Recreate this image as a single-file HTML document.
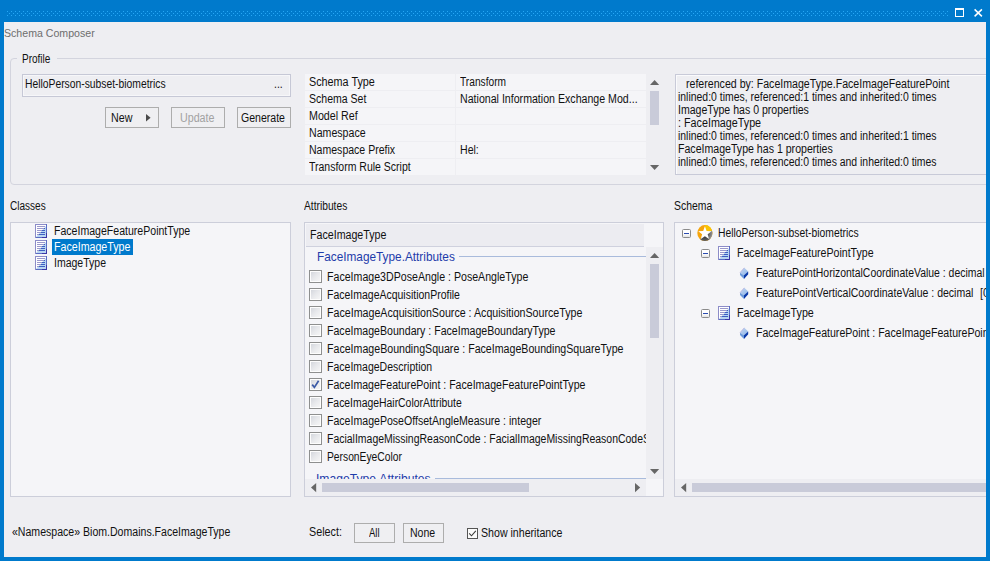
<!DOCTYPE html>
<html><head><meta charset="utf-8">
<style>
*{box-sizing:border-box;margin:0;padding:0}
html,body{width:990px;height:561px;overflow:hidden;background:#007acc}
body{position:relative;font-family:"Liberation Sans",sans-serif;font-size:12px;color:#111}
.abs{position:absolute}
svg{position:absolute;overflow:visible}
.t{position:absolute;white-space:pre;line-height:14px;height:14px;transform-origin:0 50%}
.panel{position:absolute;background:#f5f5f8;border:1px solid #ccceda}
.btn{position:absolute;border:1px solid #adadad;background:#efeff2}
.row{position:absolute;left:305px;width:341px;height:16px;background:#f5f5f8}
.row i{position:absolute;left:150px;top:0;width:1px;height:16px;background:#eeeef2}
.cb{position:absolute;left:4px;width:13px;height:13px;border:1px solid #8e8f8f;background:linear-gradient(135deg,#d0d3da 0%,#e8e9ec 50%,#f8f8f8 100%);box-shadow:inset 0 0 0 1px #fdfdfd}
.exp{position:absolute;width:9px;height:9px;border:1px solid #8b8b8b;border-radius:1.5px;background:linear-gradient(#fff 50%,#e4e4e4)}
.exp b{position:absolute;left:1px;top:3px;width:5px;height:1px;background:#2b4bb0}
.sbt{position:absolute;background:#c9cbd9}
</style></head><body>
<svg width="0" height="0"><defs>
<pattern id="d" width="4" height="4" patternUnits="userSpaceOnUse"><rect x="0" y="0" width="1" height="1" fill="#27a7f5"/><rect x="2" y="2" width="1" height="1" fill="#27a7f5"/></pattern>
<g id="cls" shape-rendering="crispEdges">
<rect x="0" y="0" width="12" height="14" fill="#fff"/>
<path d="M1 13 L11 2 L11 13Z" fill="#b9d5f1" shape-rendering="auto"/>
<rect x="2" y="2" width="8" height="1" fill="#9a98cc"/><rect x="2" y="4" width="8" height="1" fill="#9a98cc"/><rect x="2" y="6" width="8" height="1" fill="#9a98cc"/><rect x="2" y="8" width="8" height="1" fill="#9a98cc"/><rect x="2" y="10" width="8" height="1" fill="#9a98cc"/>
<rect x="9" y="4" width="1" height="1" fill="#3f5fc2"/><rect x="7" y="6" width="3" height="1" fill="#3f5fc2"/><rect x="6" y="8" width="4" height="1" fill="#3f5fc2"/><rect x="4" y="10" width="6" height="1" fill="#3f5fc2"/>
<rect x="0" y="0" width="12" height="1" fill="#8c8cc8"/><rect x="0" y="0" width="1" height="14" fill="#8c8cc8"/>
<rect x="11" y="0" width="1" height="9" fill="#5a6cc4"/><rect x="11" y="9" width="1" height="5" fill="#3b36a6"/>
<rect x="1" y="13" width="6" height="1" fill="#5a6cc4"/><rect x="7" y="13" width="5" height="1" fill="#3b36a6"/>
</g>
<g id="attr">
<linearGradient id="ga" x1="0" y1="0" x2="1" y2="1"><stop offset="0" stop-color="#c4d6f2"/><stop offset="1" stop-color="#8fb6e8"/></linearGradient>
<path d="M4.3 -0.2 L8.2 3.6 L4 7.3 L0 4.7Z" fill="url(#ga)"/>
<path d="M4.3 -0.2 L0 4.7" stroke="#b4a9d9" stroke-width="0.7"/>
<path d="M0 4.7 L4 7.3 L4 10.9 L0 7.1Z" fill="#6c9adb"/>
<path d="M4 7.3 L8.2 3.6 L8.2 6.3 L4 10.9Z" fill="#0a38a8"/>
</g>
<g id="star">
<clipPath id="sc"><ellipse cx="7.9" cy="8.1" rx="7.6" ry="8"/></clipPath>
<radialGradient id="gd" gradientUnits="userSpaceOnUse" cx="7.9" cy="8" r="8"><stop offset="0.4" stop-color="#3a3a3a"/><stop offset="1" stop-color="#626262"/></radialGradient>
<radialGradient id="gg" gradientUnits="userSpaceOnUse" cx="7.9" cy="8" r="8"><stop offset="0.4" stop-color="#585858"/><stop offset="1" stop-color="#9a9a9a"/></radialGradient>
<g clip-path="url(#sc)">
<rect x="-1" y="-1" width="18" height="19" fill="#f5a40c"/>
<path d="M7.90 8.30 L7.90 -5.70 L22.34 -10.87 L21.36 4.44Z" fill="#f9c403"/>
<path d="M7.90 8.30 L21.06 3.51 L30.59 16.11 L15.32 20.17Z" fill="url(#gg)"/>
<path d="M7.90 8.30 L16.52 19.33 L7.90 32.30 L-0.72 19.33Z" fill="url(#gd)"/>
</g>
<path d="M7.90 1.30 L9.60 5.95 L14.56 6.14 L10.66 9.20 L12.01 13.96 L7.90 11.20 L3.79 13.96 L5.14 9.20 L1.24 6.14 L6.20 5.95Z" fill="#fff"/>
</g>
</defs></svg>

<!-- title bar -->
<svg style="left:7px;top:11px" width="942" height="6"><rect width="942" height="6" fill="url(#d)"/></svg>
<svg style="left:955px;top:8px" width="10" height="10" shape-rendering="crispEdges"><rect x="0" y="0" width="9" height="2" fill="#fff"/><rect x="0" y="0" width="1" height="9" fill="#fff"/><rect x="8" y="0" width="1" height="9" fill="#fff"/><rect x="0" y="8" width="9" height="1" fill="#fff"/></svg>
<svg style="left:974px;top:9px" width="9" height="8"><path d="M0.6 0.4 L7.9 7.4 M7.9 0.4 L0.6 7.4" stroke="#fff" stroke-width="1.5" fill="none"/></svg>

<div class="abs" style="left:4px;top:22px;width:982px;height:535px;background:#eeeef2"></div>
<div class="abs" style="left:0;top:0;width:986px;height:557px;overflow:hidden">

<!-- Profile group -->
<div class="abs" style="left:10px;top:58px;width:990px;height:127px;border:1px solid #d3d4de;border-radius:4px"></div>
<div class="abs" style="left:17px;top:52px;width:40px;height:14px;background:#eeeef2"></div>
<div class="abs" style="left:22px;top:74px;width:269px;height:23px;border:1px solid #c6c8d6;background:#eeeef2;box-shadow:inset 0 0 0 1px #f6f6f9"></div>
<div class="btn" style="left:105px;top:107px;width:54px;height:21px"></div>
<svg style="left:146px;top:114px" width="5" height="8"><path d="M0 0 L4.6 3.8 L0 7.6Z" fill="#4a4a4a"/></svg>
<div class="btn" style="left:171px;top:107px;width:54px;height:21px"></div>
<div class="btn" style="left:237px;top:107px;width:54px;height:21px"></div>

<!-- property grid -->
<div class="row" style="top:74px"><i></i></div>
<div class="row" style="top:91px"><i></i></div>
<div class="row" style="top:108px"><i></i></div>
<div class="row" style="top:125px"><i></i></div>
<div class="row" style="top:142px"><i></i></div>
<div class="row" style="top:159px"><i></i></div>
<svg style="left:650px;top:80px" width="10" height="6"><path d="M0 5 L4.6 0 L9.2 5Z" fill="#666"/></svg>
<div class="sbt" style="left:650px;top:91px;width:9px;height:34px"></div>
<svg style="left:650px;top:165px" width="10" height="6"><path d="M0 0 L4.6 5 L9.2 0Z" fill="#666"/></svg>

<!-- notes -->
<div class="panel" style="left:675px;top:74px;width:330px;height:101px;background:#eeeef2;border-color:#c8cad8;box-shadow:inset 1px 1px 0 #fafafc"></div>

<!-- Classes panel -->
<div class="panel" style="left:10px;top:222px;width:281px;height:275px"></div>
<svg style="left:35px;top:224px" width="12" height="14"><use href="#cls"/></svg>
<svg style="left:35px;top:240px" width="12" height="14"><use href="#cls"/></svg>
<svg style="left:35px;top:256px" width="12" height="14"><use href="#cls"/></svg>
<div class="abs" style="left:52px;top:239px;width:81px;height:16px;background:#007acc"></div>

<!-- Attributes panel -->
<div class="panel" style="left:304px;top:222px;width:360px;height:275px"></div>
<div class="abs" style="left:305px;top:223px;width:341px;height:256px;overflow:hidden">
<div class="abs" style="left:1px;top:1px;width:338px;height:22px;background:#ececf1"></div>
<div class="abs" style="left:1px;top:23px;width:338px;height:1px;background:#cfd1de"></div>
<div class="abs" style="left:154px;top:33px;width:187px;height:1px;background:#a9bbdc"></div>
<div class="abs" style="left:130px;top:255px;width:211px;height:1px;background:#a9bbdc"></div>
<div class="cb" style="top:47px"></div>
<div class="cb" style="top:65px"></div>
<div class="cb" style="top:83px"></div>
<div class="cb" style="top:101px"></div>
<div class="cb" style="top:119px"></div>
<div class="cb" style="top:137px"></div>
<div class="cb" style="top:155px"></div>
<svg style="left:6px;top:157px" width="9" height="9"><path d="M1.2 4.6 L3.4 7.4 L7.6 0.8" stroke="#3b5aa6" stroke-width="1.7" fill="none"/></svg>
<div class="cb" style="top:173px"></div>
<div class="cb" style="top:191px"></div>
<div class="cb" style="top:209px"></div>
<div class="cb" style="top:227px"></div>
<div class="t" style="left:4.90px;top:4.84px;transform:scaleX(0.8879);">FaceImageType</div>
<div class="t" style="left:12.00px;top:25.50px;transform:scaleX(0.9081);font-size:13px;line-height:15px;height:15px;color:#1e3caa;">FaceImageType.Attributes</div>
<div class="t" style="left:21.80px;top:47.14px;transform:scaleX(0.8849);">FaceImage3DPoseAngle : PoseAngleType</div>
<div class="t" style="left:21.80px;top:65.14px;transform:scaleX(0.8739);">FaceImageAcquisitionProfile</div>
<div class="t" style="left:21.80px;top:83.14px;transform:scaleX(0.8883);">FaceImageAcquisitionSource : AcquisitionSourceType</div>
<div class="t" style="left:21.80px;top:101.14px;transform:scaleX(0.8828);">FaceImageBoundary : FaceImageBoundaryType</div>
<div class="t" style="left:21.80px;top:119.14px;transform:scaleX(0.8853);">FaceImageBoundingSquare : FaceImageBoundingSquareType</div>
<div class="t" style="left:21.80px;top:137.14px;transform:scaleX(0.8762);">FaceImageDescription</div>
<div class="t" style="left:21.80px;top:155.14px;transform:scaleX(0.8804);">FaceImageFeaturePoint : FaceImageFeaturePointType</div>
<div class="t" style="left:21.80px;top:173.14px;transform:scaleX(0.8668);">FaceImageHairColorAttribute</div>
<div class="t" style="left:21.80px;top:191.14px;transform:scaleX(0.8810);">FaceImagePoseOffsetAngleMeasure : integer</div>
<div class="t" style="left:21.80px;top:209.14px;transform:scaleX(0.8725);">FacialImageMissingReasonCode : FacialImageMissingReasonCodeSimpleType</div>
<div class="t" style="left:21.80px;top:227.14px;transform:scaleX(0.8572);">PersonEyeColor</div>
<div class="t" style="left:11.30px;top:247.50px;transform:scaleX(0.9329);font-size:13px;line-height:15px;height:15px;color:#1e3caa;">ImageType.Attributes</div>
</div>
<!-- attr scrollbars -->
<div class="abs" style="left:305px;top:479px;width:341px;height:17px;background:#eeeef2"></div>
<div class="abs" style="left:646px;top:247px;width:17px;height:232px;background:#eeeef2"></div>
<svg style="left:650px;top:253px" width="10" height="6"><path d="M0 5 L4.6 0 L9.2 5Z" fill="#666"/></svg>
<div class="sbt" style="left:650px;top:264px;width:9px;height:74px"></div>
<svg style="left:650px;top:469px" width="10" height="6"><path d="M0 0 L4.6 5 L9.2 0Z" fill="#666"/></svg>
<svg style="left:311px;top:483px" width="6" height="10"><path d="M5.2 0 L0 4.6 L5.2 9.2Z" fill="#666"/></svg>
<div class="sbt" style="left:322px;top:483px;width:207px;height:9px"></div>
<svg style="left:635px;top:483px" width="6" height="10"><path d="M0 0 L5.2 4.6 L0 9.2Z" fill="#666"/></svg>

<!-- Schema panel -->
<div class="panel" style="left:674px;top:222px;width:330px;height:275px"></div>
<div class="abs" style="left:676px;top:223px;width:310px;height:256px;overflow:hidden">
<div class="exp" style="left:6px;top:6px"><b></b></div>
<svg style="left:21px;top:2px" width="16" height="17"><use href="#star"/></svg>
<div class="exp" style="left:25px;top:26px"><b></b></div>
<svg style="left:42px;top:23px" width="12" height="14"><use href="#cls"/></svg>
<svg style="left:64px;top:45px" width="9" height="11"><use href="#attr"/></svg>
<svg style="left:64px;top:65px" width="9" height="11"><use href="#attr"/></svg>
<div class="exp" style="left:25px;top:86px"><b></b></div>
<svg style="left:42px;top:83px" width="12" height="14"><use href="#cls"/></svg>
<svg style="left:64px;top:105px" width="9" height="11"><use href="#attr"/></svg>
<div class="t" style="left:41.90px;top:2.84px;transform:scaleX(0.8604);">HelloPerson-subset-biometrics</div>
<div class="t" style="left:60.50px;top:22.84px;transform:scaleX(0.8826);">FaceImageFeaturePointType</div>
<div class="t" style="left:79.70px;top:42.84px;transform:scaleX(0.8705);">FeaturePointHorizontalCoordinateValue : decimal</div>
<div class="t" style="left:79.70px;top:62.84px;transform:scaleX(0.8769);">FeaturePointVerticalCoordinateValue : decimal</div>
<div class="t" style="left:304.00px;top:62.84px;transform:scaleX(0.9050);">[0..1]</div>
<div class="t" style="left:60.50px;top:82.84px;transform:scaleX(0.8925);">FaceImageType</div>
<div class="t" style="left:79.70px;top:102.84px;transform:scaleX(0.8804);">FaceImageFeaturePoint : FaceImageFeaturePointType</div>
</div>
<div class="abs" style="left:675px;top:479px;width:311px;height:17px;background:#eeeef2"></div>
<svg style="left:681px;top:483px" width="6" height="10"><path d="M5.2 0 L0 4.6 L5.2 9.2Z" fill="#666"/></svg>
<div class="sbt" style="left:692px;top:483px;width:300px;height:9px"></div>

<!-- bottom -->
<div class="btn" style="left:354px;top:523px;width:41px;height:20px"></div>
<div class="btn" style="left:403px;top:523px;width:41px;height:20px"></div>
<div class="abs" style="left:467px;top:528px;width:11px;height:11px;border:1px solid #555;background:#fbfbfb"></div>
<svg style="left:468px;top:529px" width="9" height="9"><path d="M1.2 4.4 L3.5 6.8 L7.8 1.8" stroke="#3a3a3a" stroke-width="1.1" fill="none"/></svg>

<div class="t" style="left:3.90px;top:27.31px;transform:scaleX(1.0092);font-size:10.5px;line-height:12.5px;height:12.5px;color:#6d6d6d;">Schema Composer</div>
<div class="t" style="left:21.70px;top:51.84px;transform:scaleX(0.8349);">Profile</div>
<div class="t" style="left:24.80px;top:76.84px;transform:scaleX(0.8604);">HelloPerson-subset-biometrics</div>
<div class="t" style="left:274.20px;top:76.84px;transform:scaleX(0.8686);">...</div>
<div class="t" style="left:111.00px;top:111.24px;transform:scaleX(0.8911);">New</div>
<div class="t" style="left:179.90px;top:111.24px;transform:scaleX(0.8914);color:#a2a2a2;">Update</div>
<div class="t" style="left:240.90px;top:111.24px;transform:scaleX(0.8792);">Generate</div>
<div class="t" style="left:308.70px;top:74.84px;transform:scaleX(0.8994);">Schema Type</div>
<div class="t" style="left:308.70px;top:91.84px;transform:scaleX(0.8780);">Schema Set</div>
<div class="t" style="left:308.70px;top:108.84px;transform:scaleX(0.8903);">Model Ref</div>
<div class="t" style="left:308.70px;top:125.84px;transform:scaleX(0.8839);">Namespace</div>
<div class="t" style="left:308.70px;top:142.84px;transform:scaleX(0.8782);">Namespace Prefix</div>
<div class="t" style="left:308.70px;top:159.84px;transform:scaleX(0.8748);">Transform Rule Script</div>
<div class="t" style="left:460.10px;top:74.84px;transform:scaleX(0.8482);">Transform</div>
<div class="t" style="left:460.10px;top:91.84px;transform:scaleX(0.8845);">National Information Exchange Mod...</div>
<div class="t" style="left:460.10px;top:142.84px;transform:scaleX(0.8808);">Hel:</div>
<div class="t" style="left:686.30px;top:76.84px;transform:scaleX(0.8834);">referenced by: FaceImageType.FaceImageFeaturePoint</div>
<div class="t" style="left:677.50px;top:89.84px;transform:scaleX(0.8692);">inlined:0 times, referenced:1 times and inherited:0 times</div>
<div class="t" style="left:677.50px;top:102.84px;transform:scaleX(0.8799);">ImageType has 0 properties</div>
<div class="t" style="left:677.50px;top:115.84px;transform:scaleX(0.8963);">: FaceImageType</div>
<div class="t" style="left:677.50px;top:128.84px;transform:scaleX(0.8692);">inlined:0 times, referenced:0 times and inherited:1 times</div>
<div class="t" style="left:677.50px;top:141.84px;transform:scaleX(0.8824);">FaceImageType has 1 properties</div>
<div class="t" style="left:677.50px;top:154.84px;transform:scaleX(0.8692);">inlined:0 times, referenced:0 times and inherited:0 times</div>
<div class="t" style="left:9.70px;top:198.64px;transform:scaleX(0.8363);">Classes</div>
<div class="t" style="left:303.90px;top:198.64px;transform:scaleX(0.8540);">Attributes</div>
<div class="t" style="left:674.10px;top:198.64px;transform:scaleX(0.8676);">Schema</div>
<div class="t" style="left:54.10px;top:223.84px;transform:scaleX(0.8800);">FaceImageFeaturePointType</div>
<div class="t" style="left:54.10px;top:239.84px;transform:scaleX(0.8879);color:#fff;">FaceImageType</div>
<div class="t" style="left:54.10px;top:255.84px;transform:scaleX(0.8758);">ImageType</div>
<div class="t" style="left:12.10px;top:524.94px;transform:scaleX(0.8798);">«Namespace» Biom.Domains.FaceImageType</div>
<div class="t" style="left:308.80px;top:525.14px;transform:scaleX(0.8968);">Select:</div>
<div class="t" style="left:368.70px;top:526.44px;transform:scaleX(0.7944);">All</div>
<div class="t" style="left:410.10px;top:526.44px;transform:scaleX(0.8784);">None</div>
<div class="t" style="left:481.10px;top:525.74px;transform:scaleX(0.8842);">Show inheritance</div>
</div>
</body></html>
